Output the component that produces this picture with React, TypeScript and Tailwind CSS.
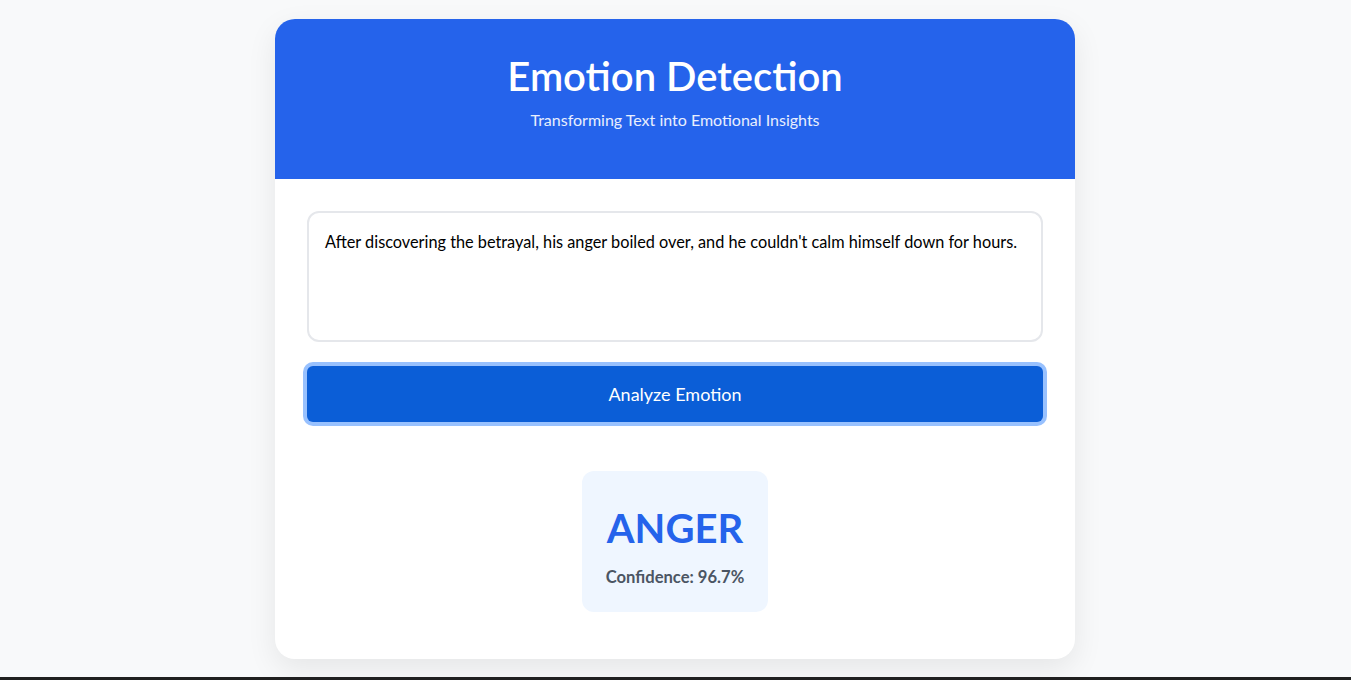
export default function App() {
  return (
    <div className="h-[680px] flex flex-col bg-[#f8f9fa] font-['Lato',sans-serif]">
      <main className="flex-1 pt-[19px] pl-[275px]">
        <div className="w-[800px] h-[640px] bg-white rounded-[20px] overflow-hidden shadow-[0_10px_30px_rgba(0,0,0,0.08)]">
          <div className="bg-[#2563eb] h-[160px] pt-[33px] text-center text-white">
            <h1 className="text-[40px] leading-[48px] font-semibold">Emotion Detection</h1>
            <p className="mt-2 text-base leading-6 text-white/90">Transforming Text into Emotional Insights</p>
          </div>
          <div className="p-8">
            <textarea
              className="block w-full h-[131px] resize-none border-2 border-[#e5e7eb] rounded-xl px-4 pt-[17px] text-[16.3px] leading-6 text-black outline-none"
              defaultValue="After discovering the betrayal, his anger boiled over, and he couldn't calm himself down for hours."
            />
            <button className="block mt-6 w-full h-14 rounded-md bg-[#0b5ed7] text-white text-lg ring-4 ring-[#98c1fe]">
              Analyze Emotion
            </button>
            <div className="flex justify-center mt-[49px]">
              <div className="bg-[#eff6ff] rounded-xl px-6 pt-[33px] pb-[23px] text-center">
                <div className="text-[40px] leading-[48px] font-bold text-[#2563eb]">ANGER</div>
                <div className="mt-[13px] text-[16.6px] leading-6 font-bold text-[#4b5563]">Confidence: 96.7%</div>
              </div>
            </div>
          </div>
        </div>
      </main>
      <div className="h-[3px] bg-[#202020]" />
    </div>
  );
}
